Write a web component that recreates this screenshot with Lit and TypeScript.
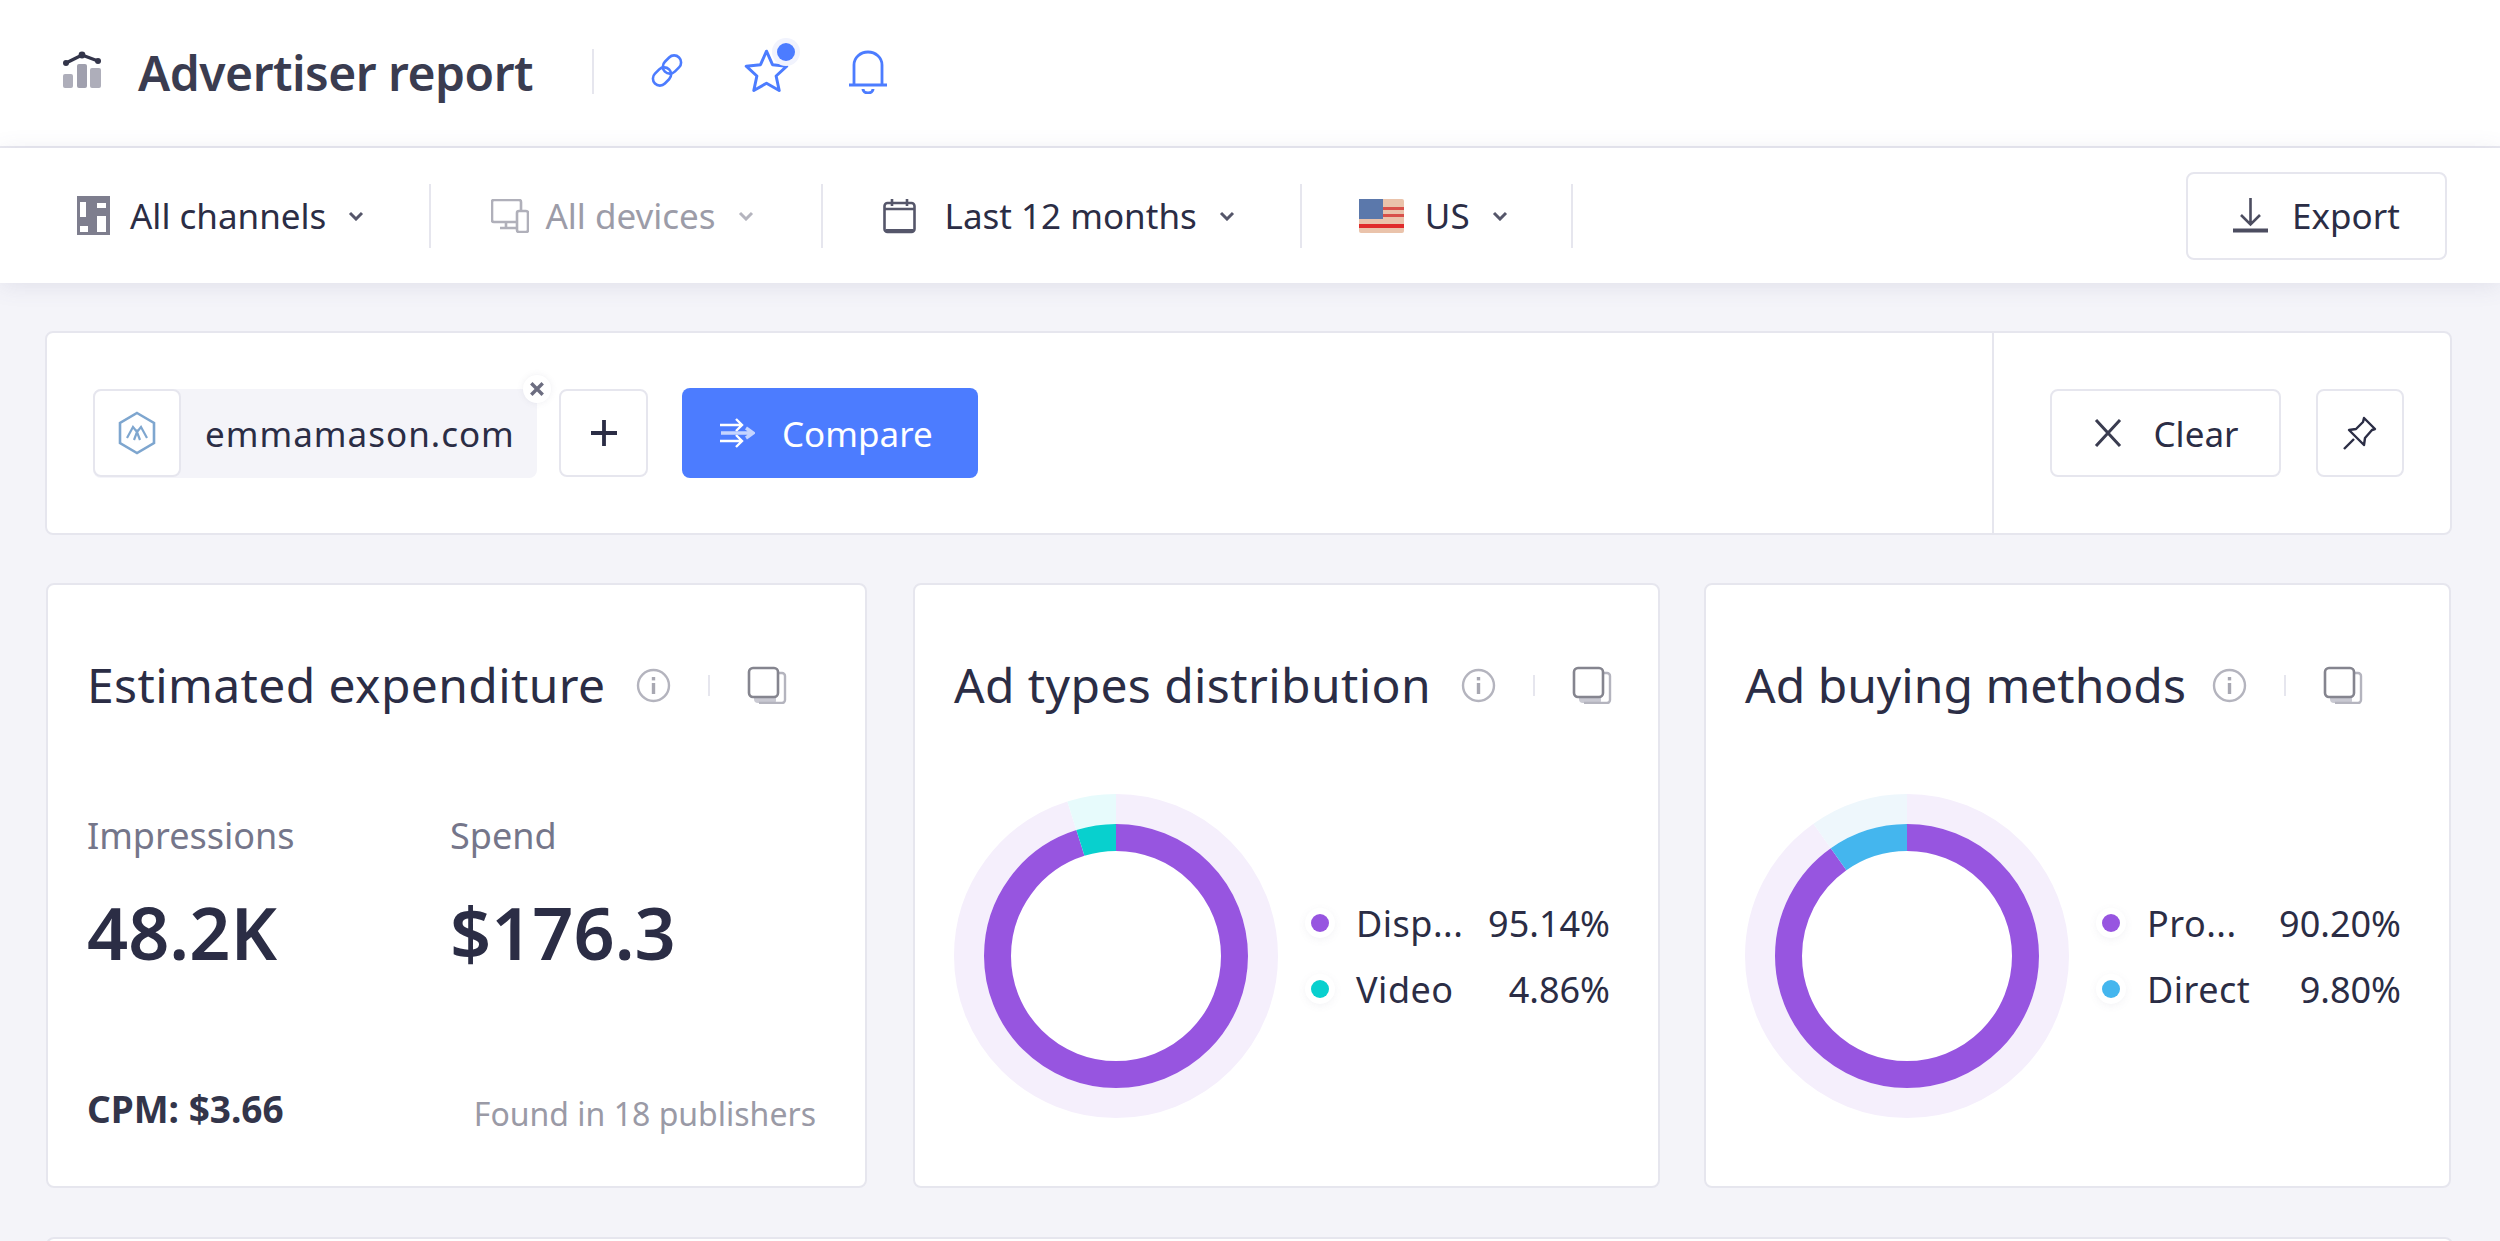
import { LitElement, html, css, svg } from 'lit';
import { customElement } from 'lit/decorators.js';

type Slice = { label: string; value: number; color: string; halo: string; shown: string };

const PURPLE = '#9755e0';

const adTypes: Slice[] = [
  { label: 'Disp...', value: 95.14, color: PURPLE, halo: '#f5effc', shown: '95.14%' },
  { label: 'Video', value: 4.86, color: '#08d0ce', halo: '#e7fbfc', shown: '4.86%' },
];

const buying: Slice[] = [
  { label: 'Pro...', value: 90.2, color: PURPLE, halo: '#f5effc', shown: '90.20%' },
  { label: 'Direct', value: 9.8, color: '#44b6ee', halo: '#eef7fc', shown: '9.80%' },
];

const chevron = svg`<svg class="chev" width="16" height="10" viewBox="0 0 16 10"><path d="M2 2l6 6 6-6" fill="none" stroke="currentColor" stroke-width="3"/></svg>`;

const infoIcon = svg`<svg width="35" height="35" viewBox="0 0 35 35"><circle cx="17.5" cy="17.5" r="15.5" fill="none" stroke="#b4b4be" stroke-width="2.4"/><rect x="15.8" y="15" width="3.4" height="11" fill="#a8a8b2"/><rect x="15.8" y="9" width="3.4" height="3.4" fill="#a8a8b2"/></svg>`;

const copyIcon = svg`<svg width="40" height="38" viewBox="0 0 40 38"><path d="M7 29h22v6a2 2 0 0 1-2 2H11a4 4 0 0 1-4-4z" fill="#c9c9d2"/><path d="M32 7h3a3 3 0 0 1 3 3v24a3 3 0 0 1-3 3H12" fill="none" stroke="#b4b4be" stroke-width="2.4"/><rect x="2" y="2" width="29" height="29" rx="4" fill="#fff" stroke="#85858f" stroke-width="2.6"/></svg>`;

@customElement('app-root')
export class AppRoot extends LitElement {
  static styles = css`
    :host {
      display: block;
      height: 1241px;
      overflow: hidden;
      background: #f4f4f9;
      color: #2b2d45;
      font-family: 'Noto Sans', 'Liberation Sans', sans-serif;
    }
    svg {
      display: block;
      flex: none;
    }

    .head {
      height: 146px;
      background: #fff;
      border-bottom: 2px solid #e9e9f0;
      display: flex;
      align-items: center;
      padding-left: 62px;
    }
    .logo {
      margin-right: 36px;
      margin-top: -6px;
    }
    h1 {
      margin: 0;
      font-size: 48px;
      font-weight: 600;
      letter-spacing: -0.5px;
      color: #3a3c50;
      line-height: 60px;
      width: 397px;
      white-space: nowrap;
    }
    .head-sep {
      width: 2px;
      height: 45px;
      background: #e6e6ee;
      margin: -4px 53px 0 57px;
    }
    .head svg.ic {
      margin-top: -4px;
    }
    .star-wrap {
      position: relative;
      margin: 0 58px 0 56px;
    }
    .star-dot {
      position: absolute;
      left: 34px;
      top: -9px;
      width: 18px;
      height: 18px;
      border-radius: 50%;
      background: #4c7cff;
      box-shadow: 0 0 0 5px #f1f3fd;
    }

    .bar {
      height: 135px;
      background: #fff;
      display: flex;
      align-items: center;
      padding: 0 53px 0 77px;
      box-shadow: 0 3px 22px rgba(90, 90, 130, 0.12);
      position: relative;
      font-size: 35px;
    }
    .filter {
      display: flex;
      align-items: center;
      height: 64px;
      padding: 0 65px 0 60px;
      border-right: 2px solid #e6e6ee;
      white-space: nowrap;
    }
    .filter:first-child {
      padding-left: 0;
    }
    .filter.off {
      color: #9c9ca8;
      padding-right: 67px;
    }
    .filter.country {
      padding: 0 63px 0 57px;
    }
    .filter .chev {
      color: #55566a;
      margin-left: 22px;
    }
    .filter.off .chev {
      color: #b4b4be;
    }
    .i-channels {
      margin-right: 20px;
    }
    .i-devices {
      margin-right: 16px;
    }
    .i-calendar {
      margin-right: 29px;
    }
    .i-flag {
      margin-right: 21px;
    }
    .export {
      margin-left: auto;
    }

    .btn {
      display: inline-flex;
      align-items: center;
      justify-content: center;
      box-sizing: border-box;
      height: 88px;
      background: #fff;
      border: 2px solid #e6e6ee;
      border-radius: 8px;
      font: inherit;
      color: inherit;
      padding: 0;
    }
    .btn.export {
      width: 261px;
      gap: 24px;
    }
    .btn.clear {
      width: 231px;
      gap: 31px;
      font-size: 35px;
    }
    .btn.pin {
      width: 88px;
      margin-left: 35px;
    }
    .btn.plus {
      width: 89px;
      margin-left: 22px;
    }
    .btn.compare {
      width: 296px;
      height: 90px;
      margin-left: 34px;
      background: #4c7cff;
      border: none;
      color: #fff;
      justify-content: flex-start;
      padding-left: 37px;
      gap: 27px;
      font-size: 35px;
    }

    .compare-card {
      margin: 48px 48px 0 45px;
      height: 204px;
      box-sizing: border-box;
      background: #fff;
      border: 2px solid #e6e6ee;
      border-radius: 8px;
      display: flex;
    }
    .chips {
      flex: 1;
      display: flex;
      align-items: center;
      padding-left: 46px;
    }
    .chip {
      position: relative;
      display: flex;
      align-items: center;
      width: 444px;
      height: 89px;
      background: #f4f4f9;
      border-radius: 8px;
      font-size: 35px;
      letter-spacing: 1px;
      white-space: nowrap;
    }
    .chip-logo {
      width: 88px;
      height: 88px;
      box-sizing: border-box;
      background: #fff;
      border: 2px solid #e6e6ee;
      border-radius: 8px;
      display: flex;
      align-items: center;
      justify-content: center;
      margin-right: 24px;
    }
    .chip-x {
      position: absolute;
      right: -14px;
      top: -14px;
      width: 28px;
      height: 28px;
      border-radius: 50%;
      background: #fff;
      box-shadow: 0 0 6px rgba(120, 120, 150, 0.12);
      display: flex;
      align-items: center;
      justify-content: center;
    }
    .actions {
      width: 458px;
      border-left: 2px solid #e6e6ee;
      display: flex;
      align-items: center;
      padding-left: 56px;
      box-sizing: border-box;
    }

    .cards {
      display: grid;
      grid-template-columns: 821px 749px 747px;
      column-gap: 44px;
      margin: 48px 0 0 46px;
    }
    .card {
      height: 605px;
      box-sizing: border-box;
      background: #fff;
      border: 2px solid #e6e6ee;
      border-radius: 8px;
      padding: 70px 0 0 39px;
      display: flex;
      flex-direction: column;
    }
    .card.second {
      margin-left: 2px;
    }
    .title {
      display: flex;
      align-items: center;
      height: 60px;
    }
    h2 {
      margin: 0;
      font-size: 48px;
      font-weight: 400;
      letter-spacing: 0.4px;
      white-space: nowrap;
      line-height: 60px;
    }
    .title .info {
      margin-left: 30px;
    }
    .title .tick {
      width: 2px;
      height: 21px;
      background: #e6e6ee;
      margin: 0 37px 0 37px;
    }
    .title.tight h2 {
      letter-spacing: 0;
    }
    .title.tight .info {
      margin-left: 26px;
    }

    .stats {
      display: flex;
      margin-top: 98px;
    }
    .stat {
      width: 363px;
    }
    .stat .lbl {
      font-size: 36px;
      color: #75768a;
      line-height: 46px;
    }
    .stat .val {
      font-size: 72px;
      font-weight: 600;
      line-height: 90px;
      margin-top: 28px;
      color: #2b2d45;
    }
    .foot {
      display: flex;
      justify-content: space-between;
      align-items: flex-end;
      margin-top: auto;
      padding: 0 49px 50px 0;
    }
    .cpm {
      font-size: 37px;
      font-weight: 700;
      line-height: 44px;
      margin-bottom: 5px;
      color: #33354a;
    }
    .found {
      font-size: 32px;
      line-height: 44px;
      color: #9a9aa6;
    }

    .split {
      display: flex;
      align-items: center;
      margin-top: 79px;
      padding-right: 48px;
    }
    .legend {
      flex: 1;
      margin-left: 33px;
      display: flex;
      flex-direction: column;
      gap: 18px;
      font-size: 36px;
    }
    .row {
      display: flex;
      align-items: center;
      height: 48px;
    }
    .dot {
      width: 18px;
      height: 18px;
      border-radius: 50%;
      box-shadow: 0 0 0 6px #fff, 0 2px 8px 5px rgba(120, 120, 150, 0.1);
      margin-right: 27px;
    }
    .row .name {
      letter-spacing: 0.5px;
    }
    .pct {
      margin-left: auto;
    }

    .next {
      margin: 49px 47px 0 46px;
      height: 200px;
      background: #fff;
      border: 2px solid #e6e6ee;
      border-radius: 8px;
    }
  `;

  private donut(slices: Slice[]) {
    let offset = 0;
    const arcs = slices.map((s) => {
      const a = svg`
        <circle cx="162" cy="162" r="147" fill="none" stroke=${s.halo} stroke-width="30" pathLength="100"
          stroke-dasharray="${s.value} ${100 - s.value}" stroke-dashoffset=${-offset}></circle>
        <circle cx="162" cy="162" r="118.5" fill="none" stroke=${s.color} stroke-width="27" pathLength="100"
          stroke-dasharray="${s.value} ${100 - s.value}" stroke-dashoffset=${-offset}></circle>`;
      offset += s.value;
      return a;
    });
    return html`<svg width="324" height="324" viewBox="0 0 324 324">
      <g transform="rotate(-90 162 162)">${arcs}</g>
    </svg>`;
  }

  private cardTitle(text: string, tight = false) {
    return html`<div class="title ${tight ? 'tight' : ''}">
      <h2>${text}</h2>
      <span class="info">${infoIcon}</span>
      <span class="tick"></span>
      ${copyIcon}
    </div>`;
  }

  private splitCard(title: string, slices: Slice[], cls = '', tight = false) {
    return html`<section class="card ${cls}">
      ${this.cardTitle(title, tight)}
      <div class="split">
        ${this.donut(slices)}
        <div class="legend">
          ${slices.map(
            (s) => html`<div class="row">
              <span class="dot" style="background:${s.color}"></span>
              <span class="name">${s.label}</span>
              <span class="pct">${s.shown}</span>
            </div>`
          )}
        </div>
      </div>
    </section>`;
  }

  render() {
    return html`
      <header class="head">
        <svg class="logo" width="40" height="38" viewBox="0 0 40 38">
          <rect x="1" y="23" width="10" height="14" rx="2" fill="#aeaeba"/>
          <rect x="15" y="13" width="10" height="24" rx="2" fill="#a0a0ae"/>
          <rect x="28" y="17" width="11" height="20" rx="2" fill="#aeaeba"/>
          <path d="M4 12 20 4l16 6" fill="none" stroke="#33354a" stroke-width="3.4"/>
          <circle cx="20" cy="4" r="3.4" fill="#33354a"/>
          <circle cx="4" cy="12" r="3" fill="#33354a"/>
          <circle cx="36" cy="10" r="3" fill="#33354a"/>
        </svg>
        <h1>Advertiser report</h1>
        <span class="head-sep"></span>
        <svg class="ic" width="40" height="40" viewBox="0 0 40 40" fill="none" stroke="#4c7cff" stroke-width="2.6">
          <rect x="-7" y="-5" width="14" height="20" rx="7" transform="translate(28.5 10) rotate(45)"/>
          <rect x="-7" y="-15" width="14" height="20" rx="7" transform="translate(11.5 29) rotate(45)"/>
        </svg>
        <span class="star-wrap">
          <svg class="ic" width="47" height="47" viewBox="0 0 44 44">
            <path d="M22 3l5.6 12.6 13.4 1.4-10 9.2 2.9 13.6L22 33l-11.900 6.800 2.900-13.600-10-9.200 13.400-1.400z" fill="none" stroke="#4c7cff" stroke-width="2.800" stroke-linejoin="round"/>
          </svg>
          <span class="star-dot"></span>
        </span>
        <svg class="ic" width="40" height="45" viewBox="0 0 40 45" fill="none" stroke="#4c7cff" stroke-width="2.800">
          <path d="M6 35V16a14 13 0 0 1 28 0v19"/>
          <path d="M1 36h38"/>
          <path d="M15 40a5 4 0 0 0 10 0" stroke-width="3"/>
        </svg>
      </header>

      <nav class="bar">
        <div class="filter">
          <svg class="i-channels" width="33" height="39" viewBox="0 0 33 39">
            <rect width="33" height="39" fill="#7e7e8e"/>
            <rect x="3" y="6" width="6" height="15" fill="#fff"/>
            <rect x="20" y="7" width="9" height="5" fill="#fff"/>
            <rect x="3" y="30" width="8" height="6" fill="#fff"/>
            <rect x="20" y="20" width="9" height="16" fill="#fff"/>
          </svg>
          <span class="name">All channels</span>${chevron}
        </div>
        <div class="filter off">
          <svg class="i-devices" width="38" height="34" viewBox="0 0 38 34" fill="none" stroke="#b0b0ba" stroke-width="2.600">
            <path d="M25 23H3a2 2 0 0 1-2-2V3a2 2 0 0 1 2-2h25a2 2 0 0 1 2 2v8"/>
            <path d="M9 29h16M15 23v6"/>
            <rect x="26" y="12" width="11" height="21" rx="2" fill="#fff"/>
          </svg>
          <span class="name">All devices</span>${chevron}
        </div>
        <div class="filter">
          <svg class="i-calendar" width="33" height="36" viewBox="0 0 33 36" fill="none" stroke="#55566a" stroke-width="2.600">
            <rect x="1.500" y="5" width="30" height="29" rx="3"/>
            <path d="M9 1v7M24 1v7M2 11h29"/>
            <path d="M3 33h27" stroke-width="4"/>
          </svg>
          <span class="name">Last 12 months</span>${chevron}
        </div>
        <div class="filter country">
          <svg class="i-flag" width="45" height="34" viewBox="0 0 45 34">
            <rect width="45" height="34" rx="2" fill="#eac3ab"/>
            <rect y="8" x="24" width="21" height="3" fill="#d8504a"/>
            <rect y="15" x="24" width="21" height="3" fill="#d8504a"/>
            <rect y="25" width="45" height="4" fill="#e02b2b"/>
            <rect width="24" height="20" fill="#5b78ab"/>
          </svg>
          <span class="name">US</span>${chevron}
        </div>
        <button class="btn export">
          <svg width="35" height="35" viewBox="0 0 35 35" fill="none" stroke="#4c4d60" stroke-width="2.600">
            <path d="M17.500 0v26M8 17l9.500 9.500L27 17"/>
            <path d="M0 32.500h35" stroke-width="4"/>
          </svg>
          <span>Export</span>
        </button>
      </nav>

      <section class="compare-card">
        <div class="chips">
          <div class="chip">
            <span class="chip-logo">
              <svg width="38" height="44" viewBox="0 0 38 44" fill="none" stroke="#7ea6cf" stroke-width="2.600">
                <path d="M19 2l17 10v20L19 42 2 32V12z"/>
                <path d="M9 27l6-11 4 5 4-5 6 11M16 29l3-8 3 8" stroke-width="2.200"/>
              </svg>
            </span>
            emmamason.com
            <span class="chip-x">
              <svg width="16" height="16" viewBox="0 0 14 14"><path d="M2 2l10 10M12 2 2 12" stroke="#6c6d80" stroke-width="3"/></svg>
            </span>
          </div>
          <button class="btn plus">
            <svg width="28" height="28" viewBox="0 0 28 28"><path d="M14 1v26M1 14h26" stroke="#2b2d45" stroke-width="3.800"/></svg>
          </button>
          <button class="btn compare">
            <svg width="36" height="34" viewBox="0 0 36 34" fill="none" stroke="#fff" stroke-width="2.400">
              <path d="M1 9h21M17 3l6 6-6 6"/>
              <path d="M1 25h21M17 19l6 6-6 6"/>
              <path d="M2 17h30M27 12l7 5-7 5" stroke="#c5d4ff" stroke-width="3.400"/>
            </svg>
            <span>Compare</span>
          </button>
        </div>
        <div class="actions">
          <button class="btn clear">
            <svg width="30" height="28" viewBox="0 0 30 28"><path d="M3 1l24 26M27 1 3 27" stroke="#3a3c50" stroke-width="3"/></svg>
            <span>Clear</span>
          </button>
          <button class="btn pin">
            <svg width="34" height="34" viewBox="0 0 34 34" fill="none" stroke="#2b2d45" stroke-width="2.400" stroke-linejoin="round">
              <path d="M21 2l11 11-3 1-7 8-1 7-5-5-5-5-5-5 7-1 7-7z"/>
              <path d="M11 23 1 33"/>
            </svg>
          </button>
        </div>
      </section>

      <div class="cards">
        <section class="card">
          ${this.cardTitle('Estimated expenditure')}
          <div class="stats">
            <div class="stat">
              <div class="lbl">Impressions</div>
              <div class="val">48.2K</div>
            </div>
            <div class="stat">
              <div class="lbl">Spend</div>
              <div class="val">$176.3</div>
            </div>
          </div>
          <div class="foot">
            <span class="cpm">CPM: $3.66</span>
            <span class="found">Found in 18 publishers</span>
          </div>
        </section>
        ${this.splitCard('Ad types distribution', adTypes, 'second')}
        ${this.splitCard('Ad buying methods', buying, '', true)}
      </div>

      <div class="next"></div>
    `;
  }
}
